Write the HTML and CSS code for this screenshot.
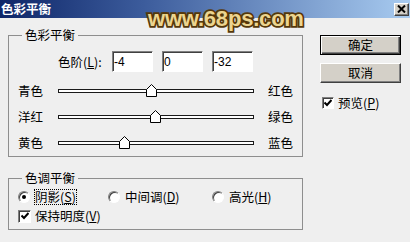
FILE: index.html
```html
<!DOCTYPE html>
<html lang="zh-CN">
<head>
    <meta charset="UTF-8">
    <meta name="viewport" content="width=device-width, initial-scale=1.0">
    <title>色彩平衡</title>
    <link rel="stylesheet" href="styles.css">
</head>
<body>
    <div class="dialog">
        <div class="titlebar">
            <span class="title">色彩平衡</span>
            <span class="close-btn">
                <svg width="9" height="8" viewBox="0 0 9 8"><path d="M1 0.5 L8 7.5 M8 0.5 L1 7.5" stroke="#000" stroke-width="2"/></svg>
            </span>
        </div>

        <!-- site watermark over the title bar -->
        <div class="watermark">www.68ps.com</div>

        <div class="content">
            <div class="main">
                <fieldset class="group color-group">
                    <legend>色彩平衡</legend>
                    <div class="levels">
                        <label for="level-1">色阶(<u>L</u>):</label>
                        <input type="text" id="level-1" value="-4">
                        <input type="text" id="level-2" value="0">
                        <input type="text" id="level-3" value="-32">
                    </div>

                    <div class="slider-row">
                        <span>青色</span>
                        <div class="track">
                            <span class="thumb" style="left: 48%">
                                <svg width="11" height="13" viewBox="0 0 11 13"><path d="M0.5 5.5 L5.5 0.5 L10.5 5.5 L10.5 12.5 L0.5 12.5 Z" fill="#fff" stroke="#000"/></svg>
                            </span>
                        </div>
                        <span>红色</span>
                    </div>
                    <div class="slider-row">
                        <span>洋红</span>
                        <div class="track">
                            <span class="thumb" style="left: 50%">
                                <svg width="11" height="13" viewBox="0 0 11 13"><path d="M0.5 5.5 L5.5 0.5 L10.5 5.5 L10.5 12.5 L0.5 12.5 Z" fill="#fff" stroke="#000"/></svg>
                            </span>
                        </div>
                        <span>绿色</span>
                    </div>
                    <div class="slider-row">
                        <span>黄色</span>
                        <div class="track">
                            <span class="thumb" style="left: 34%">
                                <svg width="11" height="13" viewBox="0 0 11 13"><path d="M0.5 5.5 L5.5 0.5 L10.5 5.5 L10.5 12.5 L0.5 12.5 Z" fill="#fff" stroke="#000"/></svg>
                            </span>
                        </div>
                        <span>蓝色</span>
                    </div>
                </fieldset>

                <fieldset class="group tone-group">
                    <legend>色调平衡</legend>
                    <div class="tone-row">
                        <label class="option"><span class="radio checked"></span><span class="focus">阴影(<u>S</u>)</span></label>
                        <label class="option"><span class="radio"></span><span>中间调(<u>D</u>)</span></label>
                        <label class="option"><span class="radio"></span><span>高光(<u>H</u>)</span></label>
                    </div>
                    <label class="option keep-row">
                        <span class="checkbox">
                            <svg width="8" height="8" viewBox="0 0 8 8"><path d="M0.5 3.5 L3 6 L7.5 1" fill="none" stroke="#000" stroke-width="2"/></svg>
                        </span>
                        <span>保持明度(<u>V</u>)</span>
                    </label>
                </fieldset>
            </div>

            <div class="side">
                <button class="button default">确定</button>
                <button class="button">取消</button>
                <label class="option preview-row">
                    <span class="checkbox">
                        <svg width="8" height="8" viewBox="0 0 8 8"><path d="M0.5 3.5 L3 6 L7.5 1" fill="none" stroke="#000" stroke-width="2"/></svg>
                    </span>
                    <span>预览(<u>P</u>)</span>
                </label>
            </div>
        </div>
    </div>
</body>
</html>
```

FILE: styles.css
```css
* {
    box-sizing: border-box;
}
body {
    margin: 0;
    background-color: #efefef;
    font-family: "Noto Sans CJK SC", "Liberation Sans", sans-serif;
    font-size: 12.5px;
    color: #000;
}
.dialog {
    position: relative;
    width: 410px;
    height: 242px;
    background-color: #efefef;
    overflow: hidden;
}
.titlebar {
    height: 18px;
    display: flex;
    align-items: center;
    justify-content: space-between;
    padding: 0 1px;
    background: linear-gradient(to right, #0e2668, #3c5c9c 35%, #a8cbf0);
}
.title {
    color: #fff;
    font-weight: 700;
    line-height: 14px;
}
.close-btn {
    width: 15px;
    height: 13px;
    display: flex;
    align-items: center;
    justify-content: center;
    background-color: #d4d0c8;
    border: 1px solid;
    border-color: #fff #404040 #404040 #fff;
    box-shadow: inset -1px -1px 0 #808080;
}
.watermark {
    position: absolute;
    left: 148px;
    top: 6px;
    font-family: "Liberation Sans", sans-serif;
    font-weight: bold;
    font-size: 22px;
    line-height: 26px;
    letter-spacing: -0.2px;
    color: #ecd590;
    -webkit-text-stroke: 3.5px #55380a;
    paint-order: stroke fill;
}
.content {
    display: flex;
    gap: 17px;
    padding: 10px 9px 0 8px;
}
.main {
    width: 295px;
}
.group {
    margin: 0;
    min-width: 0;
    border: 1px solid #8e8e8e;
    padding: 9px 8px 0 9px;
}
legend {
    margin-left: 4px;
    padding: 0 3px;
    line-height: 14px;
}
.levels {
    display: flex;
    align-items: center;
    gap: 9px;
    margin-left: 40px;
}
.levels label {
    width: 45px;
    line-height: 14px;
}
.levels input {
    width: 41px;
    height: 21px;
    margin: 0;
    padding: 0 1px;
    font-family: "Liberation Sans", sans-serif;
    font-size: 12px;
    background-color: #fff;
    border: 1px solid;
    border-color: #808080 #fff #fff #808080;
    box-shadow: inset 1px 1px 0 #404040;
    outline: none;
}
.slider-row {
    display: grid;
    grid-template-columns: 26px 196px 1fr;
    column-gap: 14px;
    align-items: center;
    height: 26px;
    line-height: 14px;
}
.levels + .slider-row {
    margin-top: 6px;
}
.track {
    position: relative;
    height: 4px;
    background-color: #fff;
    border: 1px solid #1a1a1a;
}
.thumb {
    position: absolute;
    top: -6px;
    margin-left: -6px;
    width: 11px;
    height: 13px;
    display: block;
}
.thumb svg {
    display: block;
}
.tone-group {
    margin-top: 14px;
    padding: 4px 8px 5px 9px;
}
.tone-row {
    display: grid;
    grid-template-columns: 90px 104px auto;
    height: 16px;
}
.option {
    display: flex;
    align-items: center;
    gap: 5px;
    height: 16px;
    line-height: 14px;
}
.keep-row {
    margin-top: 3px;
    gap: 4px;
}
.radio {
    width: 12px;
    height: 12px;
    border-radius: 50%;
    background-color: #fff;
    border: 1px solid;
    border-color: #808080 #fff #fff #808080;
    box-shadow: inset 1px 1px 0 #404040;
    display: flex;
    align-items: center;
    justify-content: center;
}
.radio.checked::after {
    content: "";
    width: 4px;
    height: 4px;
    border-radius: 50%;
    background-color: #000;
}
.focus {
    outline: 1px dotted #000;
    outline-offset: 0;
}
.checkbox {
    width: 13px;
    height: 13px;
    background-color: #fff;
    border: 1px solid;
    border-color: #808080 #fff #fff #808080;
    box-shadow: inset 1px 1px 0 #404040;
    display: flex;
    align-items: center;
    justify-content: center;
}
.checkbox svg {
    display: block;
}
.side {
    width: 81px;
    display: flex;
    flex-direction: column;
    gap: 8px;
    padding-top: 7px;
}
.button {
    width: 81px;
    height: 20px;
    padding: 0;
    font-family: inherit;
    font-size: 12.5px;
    line-height: 14px;
    color: #000;
    background-color: #d4d0c8;
    border: 1px solid;
    border-color: #fff #404040 #404040 #fff;
    box-shadow: inset -1px -1px 0 #808080;
}
.button.default {
    border-color: #000;
    box-shadow: inset 1px 1px 0 #fff, inset -1px -1px 0 #404040, inset -2px -2px 0 #808080;
}
.preview-row {
    margin-top: 4px;
    margin-left: 2px;
    gap: 4px;
}
.preview-row .checkbox {
    width: 12px;
    height: 12px;
}
```
